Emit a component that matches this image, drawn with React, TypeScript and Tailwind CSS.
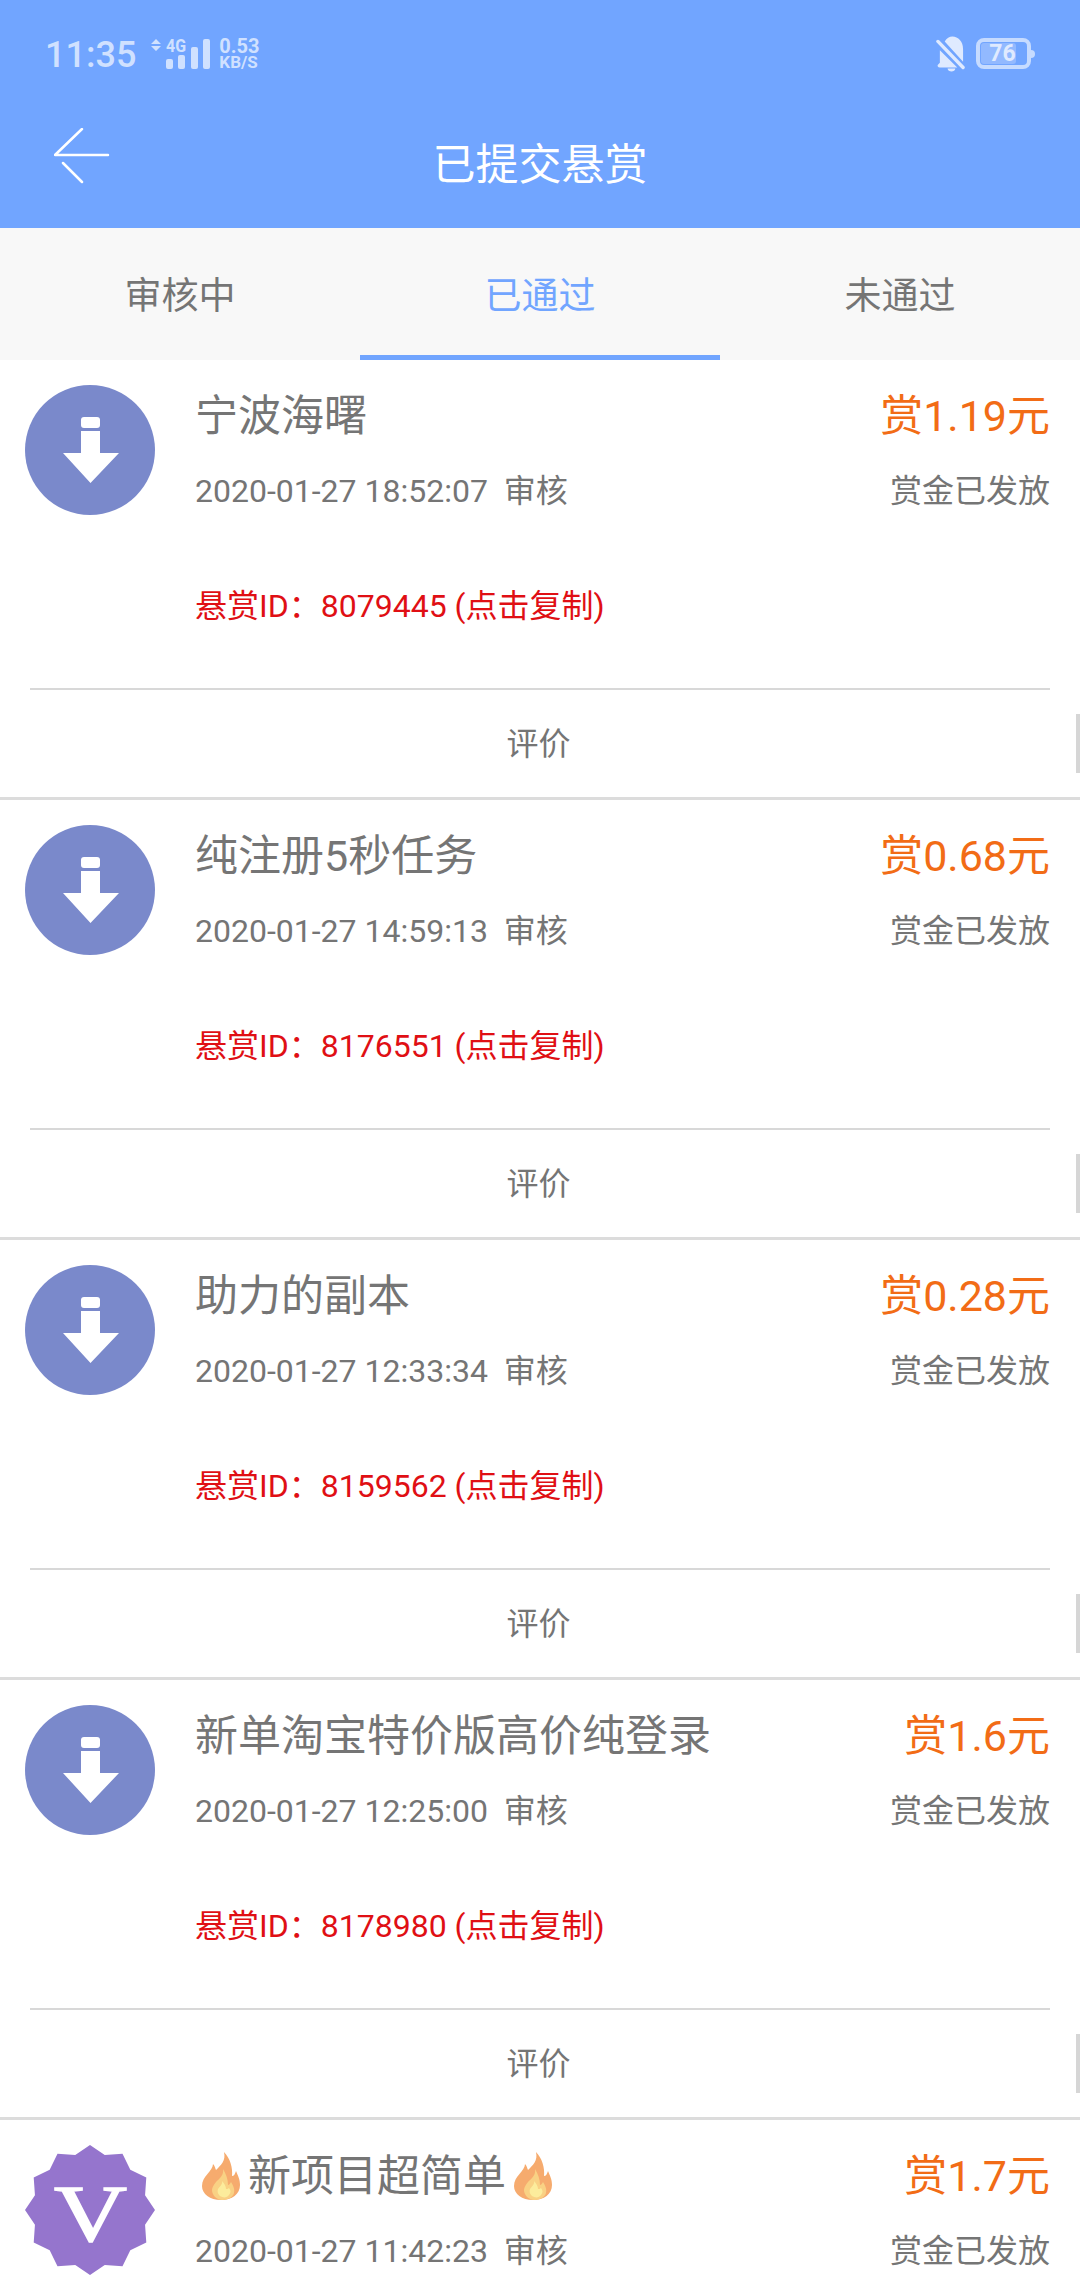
import React from "react";

const font = { fontFamily: '"Roboto","Noto Sans CJK SC",sans-serif' };

function Flame() {
  return (
    <svg width="38" height="48" viewBox="0 0 38 48" className="shrink-0">
      <path d="M22 0c2 9-3 13-8 18-1-2-1-4-3-6 0 7-11 12-11 22 0 8 8 14 19 14s19-6 19-15c0-6-2-9-4-14-1 3-2 5-4 5C31 16 28 6 22 0z" fill="#f6ab6e" />
      <path d="M21 17c1 6-3 9-7 13-4 5-5 8-3 12 2 4 6 6 10 6 5 0 10-3 11-7 1-4-1-8-3-11-1 2-2 3-3 3 0-6-2-11-5-16z" fill="#f9d184" />
      <path d="M20 29c1 3-2 5-4 8-1 3 0 5 2 7 3 2 7 2 9-1 2-2 2-5 0-7-1 1-2 1-3 1 0-3-2-6-4-8z" fill="#fcec9c" />
    </svg>
  );
}

function DownloadIcon() {
  return (
    <svg width="130" height="130" viewBox="0 0 130 130" className="shrink-0 block">
      <circle cx="65" cy="65" r="65" fill="#7a89cb" />
      <rect x="56" y="32" width="19" height="11" rx="3" fill="#fff" />
      <path d="M56 46h19v22h19L65.500 98 38 68h18z" fill="#fff" />
    </svg>
  );
}

function VIcon() {
  const pts: string[] = [];
  for (let i = 0; i < 24; i++) {
    const r = i % 2 === 0 ? 65 : 57;
    const a = (i / 24) * Math.PI * 2 - Math.PI / 2;
    pts.push(`${65 + r * Math.cos(a)},${65 + r * Math.sin(a)}`);
  }
  return (
    <svg width="130" height="130" viewBox="0 0 130 130" className="shrink-0 block">
      <polygon points={pts.join(" ")} fill="#9575cd" />
      <text x="29" y="96" textLength="73" lengthAdjust="spacingAndGlyphs" fontSize="80" fontWeight="400" fill="#fff" stroke="#fff" strokeWidth="1.500" fontFamily="Liberation Serif, serif">V</text>
    </svg>
  );
}

type Item = { title: React.ReactNode; reward: string; time: string; id?: string; v?: boolean };

const items: Item[] = [
  { title: "宁波海曙", reward: "赏1.19元", time: "2020-01-27 18:52:07", id: "8079445" },
  { title: "纯注册5秒任务", reward: "赏0.68元", time: "2020-01-27 14:59:13", id: "8176551" },
  { title: "助力的副本", reward: "赏0.28元", time: "2020-01-27 12:33:34", id: "8159562" },
  { title: "新单淘宝特价版高价纯登录", reward: "赏1.6元", time: "2020-01-27 12:25:00", id: "8178980" },
  {
    title: (
      <span className="flex items-center gap-[8px] pl-[7px]">
        <Flame />
        <span>新项目超简单</span>
        <Flame />
      </span>
    ),
    reward: "赏1.7元",
    time: "2020-01-27 11:42:23",
    v: true,
  },
];

function Card({ item }: { item: Item }) {
  return (
    <div className="relative h-[440px] shrink-0 border-b-[3px] border-[#dcdcdc] bg-white">
      <div className="flex pl-[25px] pr-[30px] pt-[25px]">
        {item.v ? <VIcon /> : <DownloadIcon />}
        <div className="ml-[40px] flex-1 min-w-0">
          <div className="flex items-center justify-between h-[60px] mt-[1px]">
            <div className="text-[43px] leading-[60px] text-[#757575]">{item.title}</div>
            <div className="text-[43px] leading-[60px] text-[#f26c16]">{item.reward}</div>
          </div>
          <div className="flex items-center justify-between h-[48px] mt-[21px]">
            <div className="text-[32px] leading-[48px] text-[#757575] whitespace-pre">{item.time}{"  "}审核</div>
            <div className="text-[32px] leading-[48px] text-[#757575]">赏金已发放</div>
          </div>
          {item.id && (
            <div className="mt-[67px] h-[48px] text-[32px] leading-[48px] text-[#e00f14] whitespace-pre">
              悬赏ID：{item.id} (点击复制)
            </div>
          )}
        </div>
      </div>
      <div className="mt-[58px] ml-[30px] mr-[30px] h-[2px] bg-[#d8d8d8]" />
      <div className="h-[105px] flex items-center justify-center pt-[3px] pr-[3px] text-[32px] text-[#757575]">
        评价
      </div>
      <div className="absolute right-0 top-[354px] h-[59px] w-[4px] bg-[#d6d6d6]" />
    </div>
  );
}

export default function App() {
  return (
    <div className="w-[1080px] h-[2280px] overflow-hidden flex flex-col bg-white" style={font}>
      <div className="h-[228px] shrink-0 bg-[#71a5ff] flex flex-col">
        <div className="h-[110px] flex items-center justify-between pl-[45px] pr-[45px] pb-[3px]">
          <div className="flex items-center text-[#d0e1ff]">
            <span className="text-[36px] font-medium leading-none pt-[3px]">11:35</span>
            <svg width="60" height="31" viewBox="0 0 60 31" className="ml-[15px] overflow-visible" fill="#d0e1ff">
              <path d="M5 1l5 5H0zM0 8h10l-5 5z" />
              <rect x="15" y="21" width="7" height="10" rx="2" />
              <rect x="27" y="17" width="7" height="14" rx="2" />
              <rect x="40" y="9" width="7" height="22" rx="2" />
              <rect x="52" y="1" width="7" height="30" rx="2" />
              <text x="15" y="14" fontSize="18" fontWeight="700" textLength="20" lengthAdjust="spacingAndGlyphs" fontFamily="Roboto">4G</text>
            </svg>
            <div className="ml-[8px] flex flex-col font-bold leading-none">
              <span className="text-[20px] leading-[17px]">0.53</span>
              <span className="text-[17px] leading-[15px]">KB/S</span>
            </div>
          </div>
          <div className="flex items-center gap-[11px]">
            <svg width="29" height="36" viewBox="0 0 30 36" fill="#dfeaff">
              <path d="M9 5c2-3 5-5 8-5 6 0 11 5 11 13v13L9 5zM4 14l18 18H4c-2 0-3-2-2-3l2-2V14zM12 33h8c0 2-2 3-4 3s-4-1-4-3z" />
              <path d="M2 5l26 27" stroke="#dfeaff" strokeWidth="3.500" strokeLinecap="round" />
            </svg>
            <div className="flex items-center">
              <div className="w-[55px] h-[31px] rounded-[8px] border-[4px] border-[#c6dbff] relative overflow-hidden">
                <div className="absolute left-[1px] top-[1px] bottom-[1px] w-[35px] rounded-[3px] bg-[#92b9ff]" />
                <div className="absolute inset-0 flex items-center justify-center text-[#dfeaff] text-[23px] font-bold leading-none pr-[2px]">76</div>
              </div>
              <div className="w-[4px] h-[8px] rounded-r-[4px] bg-[#c6dbff]" />
            </div>
          </div>
        </div>
        <div className="relative flex-1 flex items-center justify-center pb-[7px]">
          <svg width="56" height="56" viewBox="0 0 56 56" fill="none" stroke="#fff" strokeWidth="2.500" className="absolute left-[54px] top-[18px]" strokeLinecap="round">
            <path d="M1 27H54M1 27L28 1M9 35L28 54" />
          </svg>
          <span className="text-[43px] text-white font-normal leading-none">已提交悬赏</span>
        </div>
      </div>
      <div className="h-[132px] shrink-0 bg-[#f8f8f8] flex">
        <div className="flex-1 flex items-center justify-center text-[37px] text-[#757575] border-b-[5px] border-transparent pt-[11px]">审核中</div>
        <div className="flex-1 flex items-center justify-center text-[37px] text-[#71a5ff] border-b-[5px] border-[#71a5ff] pt-[11px]">已通过</div>
        <div className="flex-1 flex items-center justify-center text-[37px] text-[#757575] border-b-[5px] border-transparent pt-[11px]">未通过</div>
      </div>
      {items.map((it, i) => (
        <Card key={i} item={it} />
      ))}
    </div>
  );
}
